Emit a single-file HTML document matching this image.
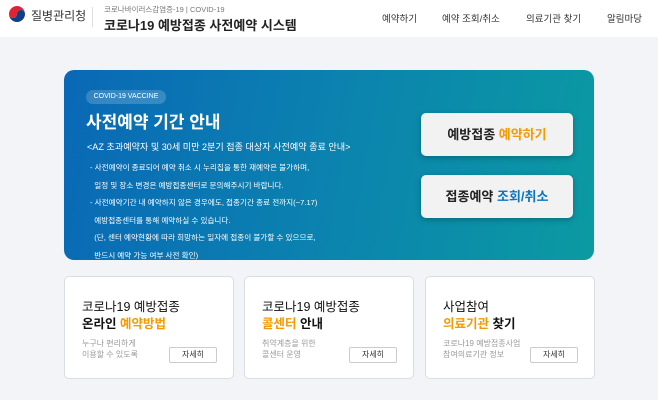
<!DOCTYPE html>
<html><head><meta charset="utf-8"><style>
*{margin:0;padding:0;box-sizing:border-box}
body{width:658px;height:400px;overflow:hidden;background:#f3f4f7;font-family:"Liberation Sans","Noto Sans CJK KR",sans-serif;color:#222;position:relative}
.hdr{position:absolute;left:0;top:0;width:658px;height:37px;background:#fff}
.abs{position:absolute;white-space:nowrap}
.hero{position:absolute;left:64px;top:70px;width:530px;height:190px;border-radius:10px;background:linear-gradient(100deg,#0a68b6 0%,#0b80b0 45%,#0b9aa2 100%)}
.pill{position:absolute;left:22px;top:20px;width:80px;height:14px;border-radius:7px;background:rgba(255,255,255,.18);color:#fff;font-size:7px;text-align:center;line-height:14px}
.btn{position:absolute;left:357px;width:152px;height:43px;background:#f2f2f2;border-radius:5px;box-shadow:0 2px 6px rgba(0,0,0,.25);text-align:center;line-height:43px;font-size:13px;font-weight:bold;color:#222}
.card{position:absolute;top:276px;width:170px;height:103px;background:#fff;border:1px solid #dcdde2;border-radius:5px}
.card .t{position:absolute;left:17px;top:22px;font-size:12.5px;line-height:17px;color:#111}
.card .s{position:absolute;left:17px;top:61px;font-size:8px;line-height:11px;color:#999}
.card .b{position:absolute;left:104px;top:70px;width:48px;height:16px;border:1px solid #ccc;border-radius:2px;font-size:8px;text-align:center;line-height:14px;color:#333}
.o{color:#f59a00;font-weight:bold}
.hero p{color:#fff}
</style></head><body>
<div class="hdr">
<svg class="abs" style="left:7px;top:5px" width="20" height="20" viewBox="0 0 20 20">
<circle cx="10" cy="10" r="9" fill="#fff"/>
<path d="M2 9 A8 8 0 0 1 18 9 A4 4 0 0 0 10 9 A4 4 0 0 1 2 9Z" fill="#e02435"/>
<path d="M2 9 A4 4 0 0 0 10 9 A4 4 0 0 1 18 9 A8 8 0 0 1 2 9Z" fill="#0f3f86"/>
</svg>
<div class="abs" style="left:31px;top:7px;font-size:12px;color:#333">질병관리청</div>
<div class="abs" style="left:92px;top:7px;width:1px;height:20px;background:#ddd"></div>
<div class="abs" style="left:104px;top:4px;font-size:7.5px;color:#777">코로나바이러스감염증-19 | COVID-19</div>
<div class="abs" style="left:104px;top:15px;font-size:13px;font-weight:bold;color:#222">코로나19 예방접종 사전예약 시스템</div>
<div class="abs" style="left:382px;top:11px;font-size:9.5px;color:#333">예약하기</div>
<div class="abs" style="left:442px;top:11px;font-size:9.5px;color:#333">예약 조회/취소</div>
<div class="abs" style="left:526px;top:11px;font-size:9.5px;color:#333">의료기관 찾기</div>
<div class="abs" style="left:607px;top:11px;font-size:9.5px;color:#333">알림마당</div>
</div>
<div class="hero">
<div class="pill">COVID-19 VACCINE</div>
<p class="abs" style="left:22px;top:38px;font-size:17px;font-weight:bold">사전예약 기간 안내</p>
<p class="abs" style="left:23px;top:69px;font-size:9.1px">&lt;AZ 초과예약자 및 30세 미만 2분기 접종 대상자 사전예약 종료 안내&gt;</p>
<div class="abs" style="left:26px;top:89px;font-size:7.6px;line-height:17.5px;color:#fff">
- 사전예약이 종료되어 예약 취소 시 누리집을 통한 재예약은 불가하며,<br>
&nbsp;&nbsp;일정 및 장소 변경은 예방접종센터로 문의해주시기 바랍니다.<br>
- 사전예약기간 내 예약하지 않은 경우에도, 접종기간 종료 전까지(~7.17)<br>
&nbsp;&nbsp;예방접종센터를 통해 예약하실 수 있습니다.<br>
&nbsp;&nbsp;(단, 센터 예약현황에 따라 희망하는 일자에 접종이 불가할 수 있으므로,<br>
&nbsp;&nbsp;반드시 예약 가능 여부 사전 확인)</div>
<div class="btn" style="top:43px">예방접종 <span style="color:#f59a00">예약하기</span></div>
<div class="btn" style="top:105px">접종예약 <span style="color:#0b74c4">조회/취소</span></div>
</div>
<div class="card" style="left:64px"><div class="t">코로나19 예방접종<br><b>온라인 </b><span class="o">예약방법</span></div><div class="s">누구나 편리하게<br>이용할 수 있도록</div><div class="b">자세히</div></div>
<div class="card" style="left:244px"><div class="t">코로나19 예방접종<br><span class="o">콜센터</span><b> 안내</b></div><div class="s">취약계층을 위한<br>콜센터 운영</div><div class="b">자세히</div></div>
<div class="card" style="left:425px"><div class="t">사업참여<br><span class="o">의료기관</span><b> 찾기</b></div><div class="s">코로나19 예방접종사업<br>참여의료기관 정보</div><div class="b">자세히</div></div>
</body></html>
